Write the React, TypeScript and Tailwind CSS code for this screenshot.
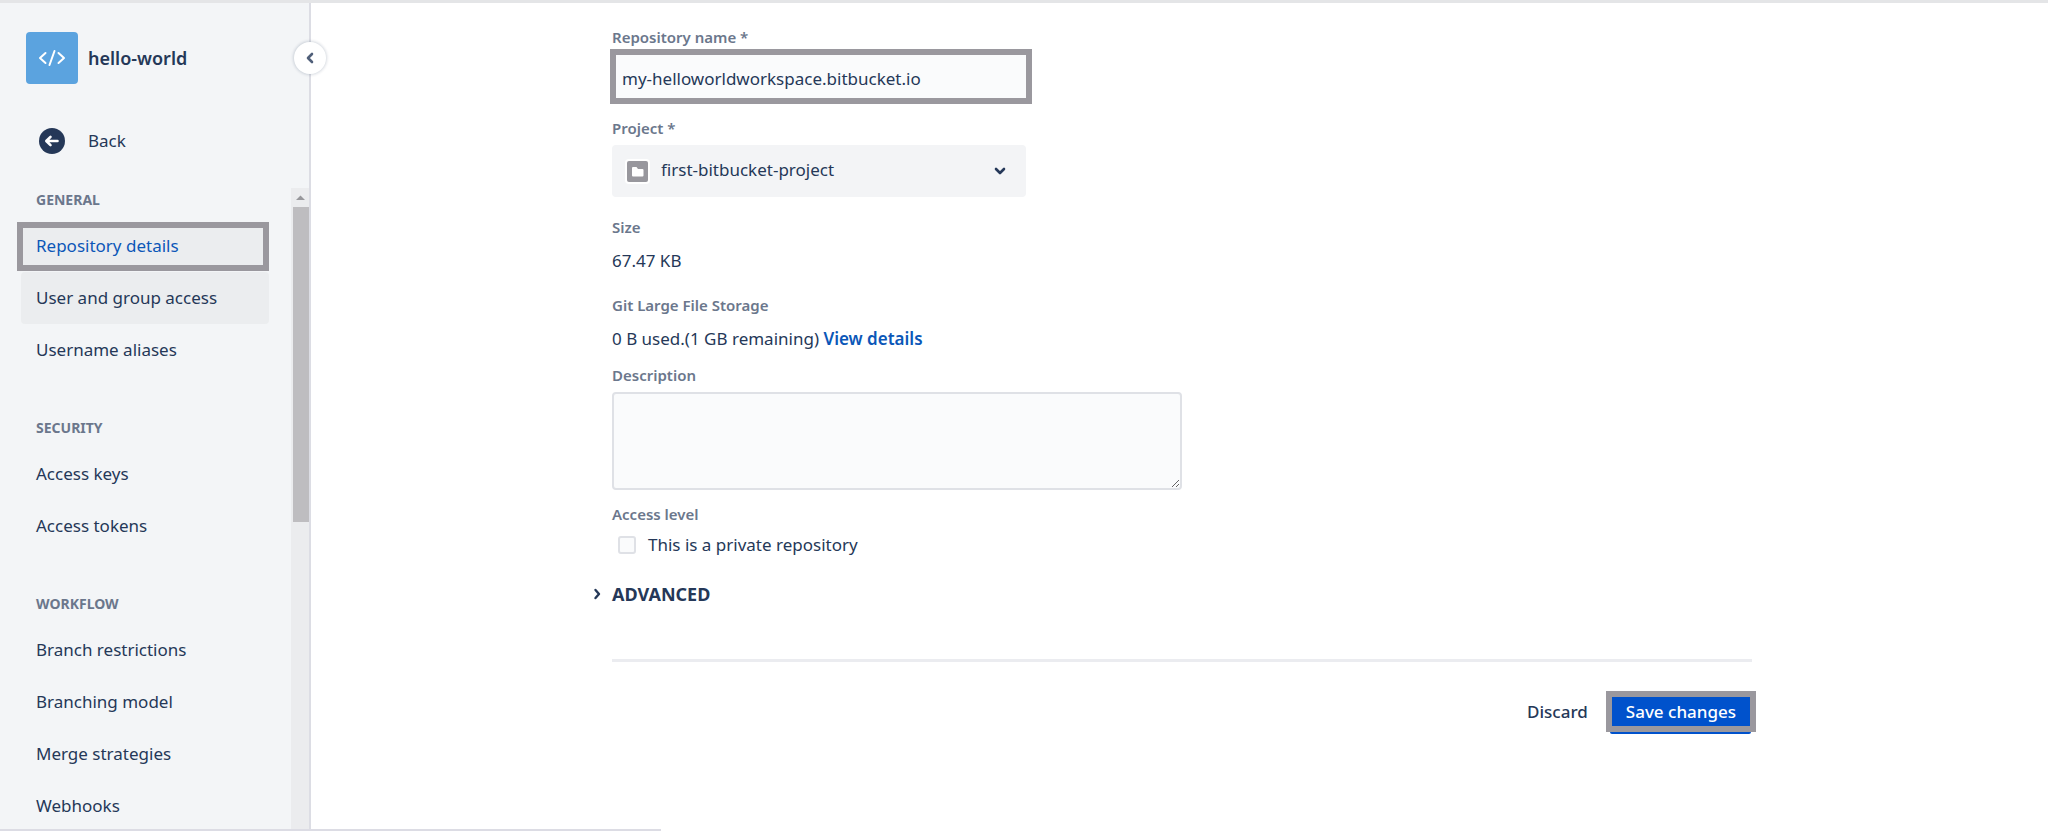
import React from "react";

const groups = [
  { title: "General", items: ["Repository details", "User and group access", "Username aliases"] },
  { title: "Security", items: ["Access keys", "Access tokens"] },
  { title: "Workflow", items: ["Branch restrictions", "Branching model", "Merge strategies", "Webhooks"] },
];

function NavItem({ label }: { label: string }) {
  if (label === "Repository details") {
    return (
      <li className="h-[52px] py-0.5">
        <a
          href="#details"
          aria-current="page"
          className="-ml-1 flex h-[49px] items-center border-6 border-[#9a989e] bg-[#ebedef] pl-[13px] text-[#0b57b8]"
        >
          {label}
        </a>
      </li>
    );
  }
  const hovered = label === "User and group access";
  return (
    <li>
      <a href="#item" className={hovered ? "flex h-[52px] items-center rounded bg-[#ebedef] pl-[15px]" : "flex h-[52px] items-center pl-[15px]"}>
        {label}
      </a>
    </li>
  );
}

function Sidebar() {
  return (
    <aside className="relative flex h-full w-[311px] shrink-0 flex-col border-r-2 border-[#dcdde4] bg-[#f3f5f7]">
      <div className="flex items-center gap-2.5 pt-[29px] pl-[26px]">
        <span className="flex size-[52px] items-center justify-center rounded bg-[#5ba3df]">
          <svg width="28" height="18" viewBox="0 0 28 18" fill="none" stroke="white" strokeWidth="2" strokeLinecap="round" strokeLinejoin="round" aria-hidden="true">
            <path d="M7.500 4 2 9l5.500 5M20.500 4 26 9l-5.500 5M16.500 2l-5 14" />
          </svg>
        </span>
        <span className="text-lg font-semibold">hello-world</span>
      </div>
      <a href="#back" className="mt-8 mb-3.5 flex h-[52px] items-center pl-[39px]">
        <svg width="26" height="26" viewBox="0 0 26 26" aria-hidden="true">
          <circle cx="13" cy="13" r="13" fill="#253858" />
          <path d="M11.500 8.800 7.300 13l4.200 4.200M7.800 13h10.700" fill="none" stroke="white" strokeWidth="2.600" strokeLinecap="round" strokeLinejoin="round" />
        </svg>
        <span className="pl-[23px]">Back</span>
      </a>
      <div className="flex min-h-0 grow">
        <nav aria-label="Repository settings" className="grow overflow-hidden pr-[22px] pl-[21px]">
          {groups.map((group) => (
            <section key={group.title} className="mb-8">
              <h2 className="flex h-10 items-center pl-[15px] text-sm font-bold text-[#6b778c] uppercase">{group.title}</h2>
              <ul>
                {group.items.map((item) => (
                  <NavItem key={item} label={item} />
                ))}
              </ul>
            </section>
          ))}
        </nav>
        <div className="mt-2 flex w-[18px] flex-col bg-[#ebecee]" aria-hidden="true">
          <svg width="18" height="19" viewBox="0 0 18 19">
            <path d="M5 12h9L9.500 7.500z" fill="#97979b" />
          </svg>
          <div className="ml-0.5 h-[49%] bg-[#bebdc0]" />
        </div>
      </div>
      <button
        type="button"
        aria-label="Collapse sidebar"
        className="absolute top-[39px] -right-[17px] flex size-8 items-center justify-center rounded-full bg-white shadow-[0_0_3px_1px_rgba(9,30,66,0.16)]"
      >
        <svg width="10" height="12" viewBox="0 0 10 12" fill="none" stroke="#505f79" strokeWidth="2.600" strokeLinecap="round" strokeLinejoin="round" aria-hidden="true">
          <path d="M7 2 3 6l4 4" />
        </svg>
      </button>
    </aside>
  );
}

const labelStyle = "block h-5 text-[15px] leading-5 font-semibold text-[#6b778c]";

function SettingsForm() {
  return (
    <form className="w-[56vw] max-w-[1140px] pt-6" onSubmit={(e) => e.preventDefault()}>
      <label htmlFor="name" className={labelStyle}>Repository name *</label>
      <input
        id="name"
        defaultValue="my-helloworldworkspace.bitbucket.io"
        className="-ml-0.5 mt-0.5 block h-[55px] w-[422px] border-6 border-[#9a989e] bg-[#fafbfc] px-1.5 pt-1 outline-none"
      />

      <label htmlFor="project" className={`${labelStyle} mt-3.5`}>Project *</label>
      <div className="mt-[7px] grid h-[52px] w-[414px] items-center rounded bg-[#f3f4f6]">
        <select id="project" className="col-start-1 row-start-1 h-full w-full appearance-none bg-transparent pb-0.5 pl-[49px] outline-none">
          <option>first-bitbucket-project</option>
        </select>
        <svg className="pointer-events-none col-start-1 row-start-1 ml-[13px]" width="25" height="25" viewBox="0 0 25 25" aria-hidden="true">
          <rect width="25" height="25" rx="4" fill="white" />
          <rect x="2" y="2" width="21" height="21" rx="2" fill="#98979d" />
          <path d="M7 9q0-1 1-1h3.500l1.500 2h4.500q1 0 1 1v5.500q0 1-1 1H8q-1 0-1-1z" fill="white" />
        </svg>
        <svg className="pointer-events-none col-start-1 row-start-1 mr-5 justify-self-end" width="12" height="10" viewBox="0 0 12 10" fill="none" stroke="#253858" strokeWidth="2.600" strokeLinecap="round" strokeLinejoin="round" aria-hidden="true">
          <path d="M2 3l4 4 4-4" />
        </svg>
      </div>

      <dl>
        <dt className={`${labelStyle} mt-5`}>Size</dt>
        <dd className="mt-3 h-6 leading-6">67.47 KB</dd>
        <dt className={`${labelStyle} mt-[22px]`}>Git Large File Storage</dt>
        <dd className="mt-3 h-6 leading-6">
          0 B used.(1 GB remaining) <a href="#lfs" className="font-semibold text-[#0b57b8]">View details</a>
        </dd>
      </dl>

      <label htmlFor="description" className={`${labelStyle} mt-3.5`}>Description</label>
      <textarea id="description" className="mt-[7px] block h-[98px] w-[570px] rounded border-2 border-[#dfe1e6] bg-[#fafbfc] p-2 outline-none" />

      <fieldset className="mt-3.5">
        <legend className={labelStyle}>Access level</legend>
        <label className="mt-[9px] flex h-6 items-center gap-3 pl-1.5">
          <input type="checkbox" className="size-[18px] appearance-none rounded-[3px] border-2 border-[#dfe1e6] bg-[#fafbfc]" />
          This is a private repository
        </label>
      </fieldset>

      <button type="button" className="mt-[25px] -ml-[22px] flex h-6 items-center gap-2 text-lg font-bold">
        <svg width="14" height="12" viewBox="0 0 14 12" fill="none" stroke="#253858" strokeWidth="2.400" strokeLinecap="round" strokeLinejoin="round" aria-hidden="true">
          <path d="M5.500 2l3.500 4-3.500 4" />
        </svg>
        ADVANCED
      </button>

      <hr className="mt-[53px] border-t-3 border-[#ebecf0]" />

      <div className="-mr-1 mt-[29px] flex items-start justify-end gap-[18px]">
        <button type="button" className="h-[41px] font-medium">Discard</button>
        <div className="flex flex-col">
          <button type="submit" className="h-[41px] border-6 border-[#9a989e] bg-[#0052cc] px-3.5 font-medium text-white">
            Save changes
          </button>
          <div className="mr-[5px] ml-1 h-0.5 rounded-b bg-[#0052cc]" />
        </div>
      </div>
    </form>
  );
}

export default function App() {
  return (
    <div className="relative flex min-h-screen flex-col bg-white font-['Noto_Sans','Open_Sans',sans-serif] text-[17px] text-[#253858]">
      <div className="flex grow border-t-3 border-[#e4e5e7]">
        <div className="h-[calc(100vh-3px)]">
          <Sidebar />
        </div>
        <main className="flex grow pl-[301px]">
          <SettingsForm />
        </main>
      </div>
      <div className="absolute bottom-0 left-0 h-0.5 w-[661px] bg-[#dcdce4]" />
    </div>
  );
}
